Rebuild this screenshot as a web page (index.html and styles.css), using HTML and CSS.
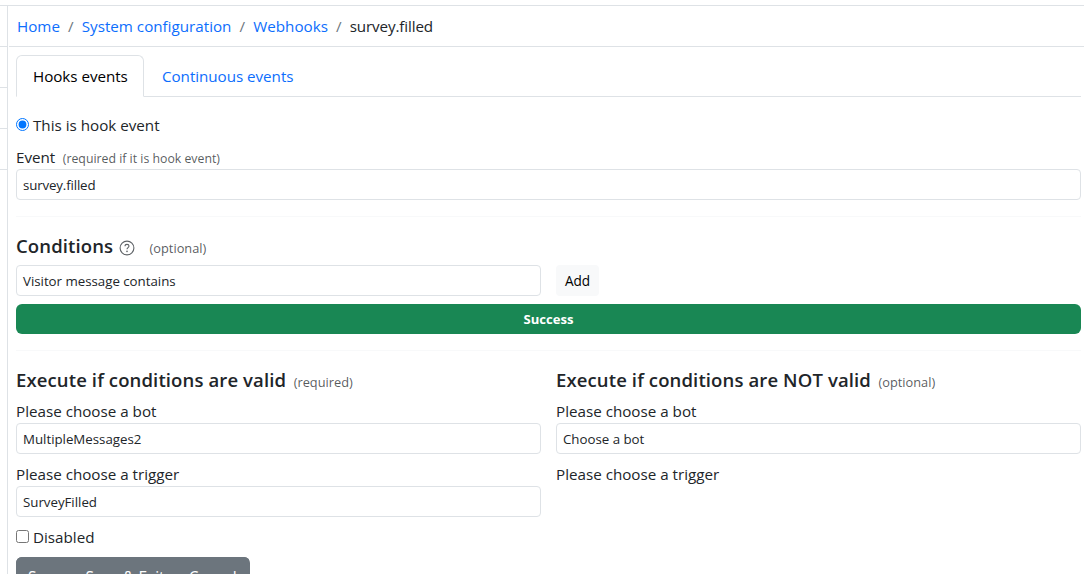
FILE: index.html
```html
<!DOCTYPE html>
<html lang="en">
<head>
<meta charset="utf-8">
<title>Webhooks - survey.filled</title>
<link rel="stylesheet" href="styles.css">
</head>
<body>
<div class="page">
  <aside class="sidebar"><i></i><i></i><i></i><i></i></aside>
  <main class="main">
    <nav class="breadcrumb"><a>Home</a><b>/</b><a>System configuration</a><b>/</b><a>Webhooks</a><b>/</b><span class="current">survey.filled</span></nav>
    <div class="content">
      <div class="tabs"><a class="tab active">Hooks events</a><a class="tab">Continuous events</a></div>
      <label class="check radio-row"><input type="radio" checked><span>This is hook event</span></label>
      <div class="label">Event<small class="hint">(required if it is hook event)</small></div>
      <div class="field narrow">survey.filled</div>
      <hr>
      <h5 class="heading">Conditions
        <svg class="help" viewBox="0 0 16 16" width="16" height="16"><circle cx="8" cy="8" r="6.9"/><path d="M6 6.3c0-1.2.8-1.9 2-1.9s2 .7 2 1.7c0 1.5-2 1.5-2 3.2"/><circle class="dot" cx="8" cy="11.4" r=".8"/></svg>
        <small class="hint">(optional)</small></h5>
      <div class="columns">
        <div class="field">Visitor message contains</div>
        <div><button class="add">Add</button></div>
      </div>
      <div class="success">Success</div>
      <hr>
      <div class="columns">
        <section>
          <h5 class="heading">Execute if conditions are valid<small class="hint">(required)</small></h5>
          <div class="label">Please choose a bot</div>
          <div class="field">MultipleMessages2</div>
          <div class="label second">Please choose a trigger</div>
          <div class="field">SurveyFilled</div>
        </section>
        <section>
          <h5 class="heading">Execute if conditions are NOT valid<small class="hint">(optional)</small></h5>
          <div class="label">Please choose a bot</div>
          <div class="field">Choose a bot</div>
          <div class="label second">Please choose a trigger</div>
        </section>
      </div>
      <label class="check disabled-row"><input type="checkbox"><span>Disabled</span></label>
      <div class="buttons"><button>Save</button><button>Save &amp; Exit</button><button>Cancel</button></div>
    </div>
  </main>
</div>
</body>
</html>
```
FILE: styles.css
```css
* { box-sizing: border-box; }
html, body { margin: 0; height: 574px; overflow: hidden; background: #fff; }
body { font: 15.2px/24px "Open Sans", "Noto Sans", sans-serif; color: #212529; padding-top: 5px; }
.page { display: flex; height: 569px; border-top: 1px solid #dee2e6; overflow: hidden; }
.sidebar { width: 8px; flex: none; border-right: 1px solid #dee2e6; }
.sidebar i { display: block; height: 41px; border-bottom: 1px solid #dee2e6; }
.main { flex: 1; min-width: 0; padding-left: 1px; }
.breadcrumb { height: 41px; padding: 8px 0 0 8px; border-bottom: 1px solid #dee2e6; display: flex; white-space: nowrap; }
.breadcrumb b { font-weight: 400; color: #6c757d; width: 21.8px; text-align: center; }
.current { letter-spacing: -.12px; }
a { color: #0d6efd; }
.content { padding: 8px 3px 0 7px; white-space: nowrap; }
.tabs { display: flex; height: 42px; border-bottom: 1px solid #dee2e6; }
.tab { padding: 9px 18px; height: 42px; letter-spacing: -.04px; }
.tab.active { width: 128px; color: #000; background: #fff; border: 1px solid #dee2e6; border-bottom-color: #fff; border-radius: 6px 6px 0 0; padding: 8px 16px; }
.check { display: flex; height: 24px; }
.check input { width: 13px; height: 13px; margin: 5px 4px 0 0; }
.radio-row { margin-top: 16px; }
.label { height: 24px; }
.radio-row + .label { margin-top: 8px; }
.hint { font-size: 12.3px; color: rgba(33, 37, 41, .75); font-weight: 400; margin-left: 7.5px; }
.field { height: 31px; border: 1px solid #dee2e6; border-radius: 4px; padding: 4px 6px; font-size: 13.3px; line-height: 22px; letter-spacing: -.02px; }
.narrow { letter-spacing: -.15px; }
hr { margin: 16px 0; border: 0; height: 1px; background: #f8f9fa; }
.heading { height: 24px; margin: 0 0 8px; font-size: 18.5px; line-height: 25px; font-weight: 600; letter-spacing: .12px; }
.heading .hint { font-weight: 500; font-size: 12.8px; letter-spacing: 0; }
.help { margin: 0 2px 0 1px; vertical-align: -3px; fill: none; stroke: #5f6367; stroke-width: 1.1; }
.help .dot { fill: #5f6367; stroke: none; }
.columns { display: grid; grid-template-columns: 1fr 1fr; gap: 15px; }
.add { display: block; width: 43px; height: 31px; border: 0; border-radius: 4px; padding: 1px 0 0; background: #f8f9fa; color: #000; font: 13.6px/30px "Open Sans", sans-serif; }
.success { height: 30px; margin-top: 8px; border-radius: 6px; background: #198754; color: #fff; text-align: center; font-weight: 700; font-size: 13.1px; line-height: 30px; }
.second { margin-top: 8px; }
.disabled-row { margin-top: 8px; }
.buttons { display: flex; width: 234px; height: 38px; margin-top: 8px; border-radius: 6px; overflow: hidden; background: #6c757d; }
.buttons button { height: 38px; border: 0; padding: 2px 12px 0; background: #6c757d; color: #fff; font: 15.5px/36px "Open Sans", sans-serif; }
```
